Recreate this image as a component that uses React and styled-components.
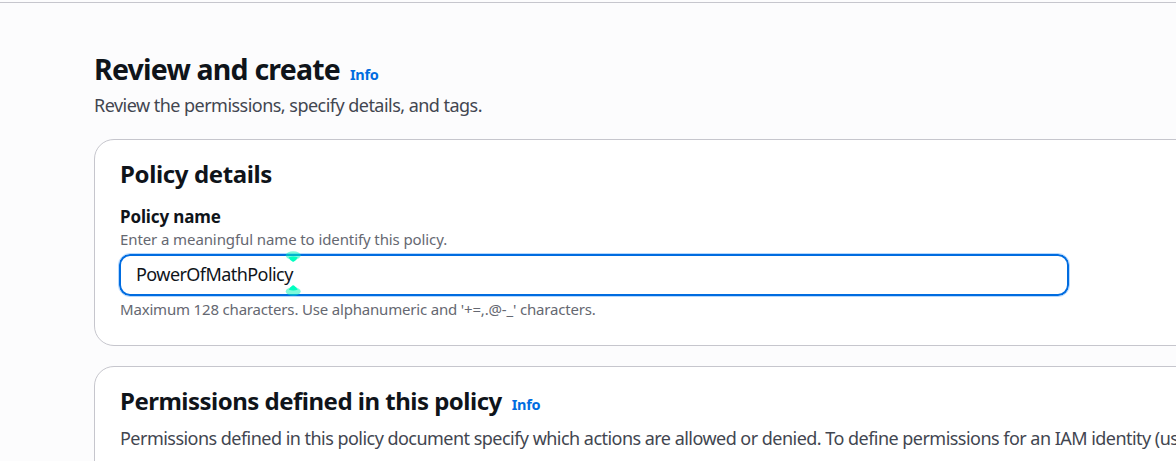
import React from "react";
import styled, { createGlobalStyle } from "styled-components";

const GlobalStyle = createGlobalStyle`
  * { box-sizing: border-box; }
  body {
    margin: 0;
    background: #fcfcfd;
    color: #0f141a;
    font-family: "Noto Sans", "Open Sans", sans-serif;
    overflow: hidden;
  }
  h1, h2, p { margin: 0; }
`;

const Page = styled.main`
  width: 1176px;
  height: 461px;
  overflow: hidden;
  padding-top: 2px;
`;

const TopRule = styled.div`
  height: 1px;
  background: #c6c6cd;
`;

const Content = styled.div`
  width: 1300px;
  padding: 46px 0 0 94px;
`;

const TitleRow = styled.header`
  display: flex;
  align-items: baseline;
  white-space: nowrap;
`;

const PageTitle = styled.h1`
  font-size: 28.5px;
  line-height: 40px;
  font-weight: 700;
  letter-spacing: -0.8px;
`;

const SectionTitle = styled.h2`
  font-size: 24px;
  line-height: 30px;
  font-weight: 700;
  letter-spacing: ${(p) => p.$tracking || "-0.51px"};
  white-space: nowrap;
`;

const InfoLink = styled.a`
  margin-left: 10px;
  color: #006ce0;
  font-size: 14.5px;
  line-height: 20px;
  font-weight: 700;
  letter-spacing: -0.3px;
`;

const Description = styled.p`
  margin: ${(p) => p.$margin};
  font-size: 18px;
  line-height: 26px;
  color: #424650;
  letter-spacing: -0.53px;
  white-space: nowrap;
`;

const Card = styled.section`
  height: ${(p) => p.$height};
  margin-top: 20px;
  padding: 19px 25px 0;
  background: #ffffff;
  border: 1px solid #c6c6cd;
  border-radius: 20px;
`;

const Field = styled.div`
  display: flex;
  flex-direction: column;
  width: 950px;
  margin-top: 15px;
`;

const Label = styled.label`
  font-size: 17px;
  line-height: 25px;
  font-weight: 700;
  letter-spacing: -0.13px;
`;

const Hint = styled.p`
  font-size: 15px;
  line-height: 20px;
  color: #656871;
  letter-spacing: ${(p) => p.$tracking};
  white-space: nowrap;
`;

const InputFrame = styled.div`
  position: relative;
  display: flex;
  width: 950px;
  height: 42px;
  margin: 5px 0 3px -1px;
`;

const NameInput = styled.input`
  width: 100%;
  padding: 0 0 2px 15px;
  border: 2px solid #006ce0;
  border-radius: 11px;
  outline: 1px solid #b4d8ff;
  outline-offset: -0.5px;
  background: #ffffff;
  color: #0f141a;
  font: 400 18px "Noto Sans", "Open Sans", sans-serif;
  letter-spacing: -0.56px;
`;

const CaretHandle = styled.svg`
  position: absolute;
  left: 166px;
  top: ${(p) => p.$top};
  width: 16px;
  height: 12px;
  transform: ${(p) => (p.$flip ? "scaleY(-1)" : "none")};
`;

function Handle({ top, flip }) {
  return (
    <CaretHandle $top={top} $flip={flip} viewBox="0 0 16 12" aria-hidden="true">
      <ellipse cx="8.2" cy="4.5" rx="7.5" ry="4.2" fill="#00f5b8" fillOpacity="0.5" />
      <path d="M3.7 6.2Q8.2 4.6 12.7 6.2Q11.7 9 9 10.6Q8.2 11 7.4 10.6Q4.7 9 3.7 6.2Z" fill="#00ffc0" />
    </CaretHandle>
  );
}

export default function App() {
  return (
    <>
      <GlobalStyle />
      <Page>
        <TopRule />
        <Content>
          <TitleRow>
            <PageTitle>Review and create</PageTitle>
            <InfoLink>Info</InfoLink>
          </TitleRow>
          <Description $margin="3px 0 21px">Review the permissions, specify details, and tags.</Description>
          <Card $height="207px">
            <SectionTitle $tracking="-0.38px">Policy details</SectionTitle>
            <Field>
              <Label htmlFor="policy-name">Policy name</Label>
              <Hint $tracking="-0.1px">Enter a meaningful name to identify this policy.</Hint>
              <InputFrame>
                <NameInput id="policy-name" defaultValue="PowerOfMathPolicy" spellCheck={false} />
                <Handle top="-3px" />
                <Handle top="30px" flip />
              </InputFrame>
              <Hint $tracking="-0.18px">Maximum 128 characters. Use alphanumeric and '+=,.@-_' characters.</Hint>
            </Field>
          </Card>
          <Card $height="180px">
            <TitleRow>
              <SectionTitle>Permissions defined in this policy</SectionTitle>
              <InfoLink>Info</InfoLink>
            </TitleRow>
            <Description $margin="9px 0 0">
              Permissions defined in this policy document specify which actions are allowed or denied. To define
              permissions for an IAM identity (user, user group, or role)
            </Description>
          </Card>
        </Content>
      </Page>
    </>
  );
}
